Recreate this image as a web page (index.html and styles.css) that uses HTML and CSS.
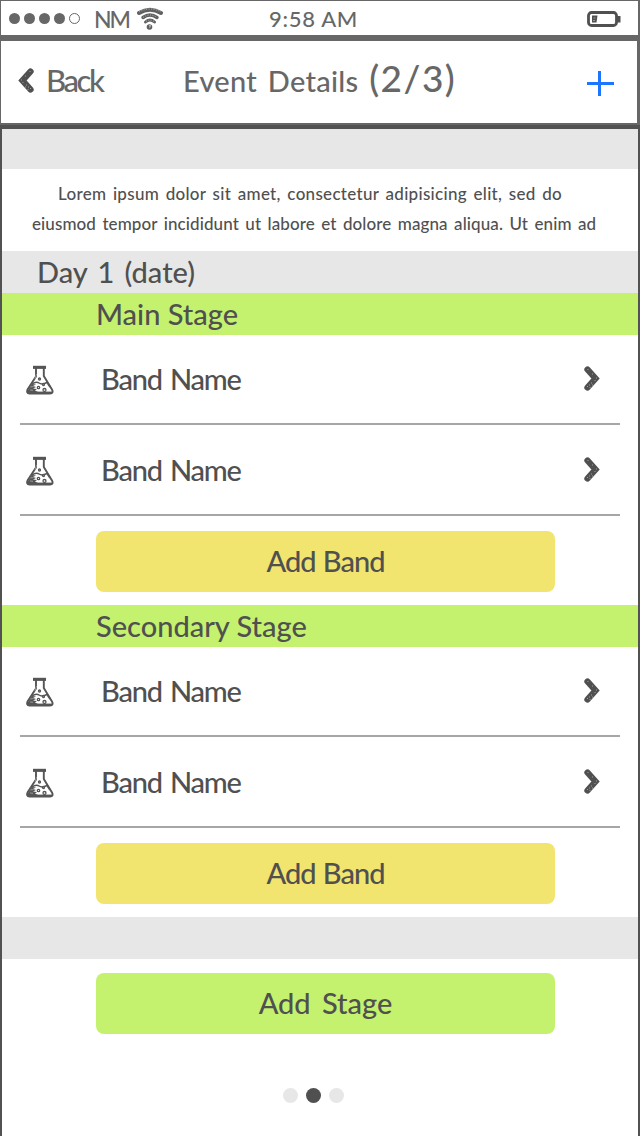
FILE: index.html
```
<!DOCTYPE html>
<html lang="en">
<head>
<meta charset="utf-8">
<title>Event Details</title>
<link rel="stylesheet" href="styles.css">
</head>
<body>
<svg class="defs" aria-hidden="true">
  <symbol id="chevron" viewBox="0 0 18 28">
    <path d="M4.5 4.5 L12.500 13.5 L4.5 22.500" fill="none" stroke="#505050" stroke-width="6.300" stroke-linecap="round" stroke-linejoin="miter"/>
    <path d="M4.500 4.500h1M9 9h1M13 13h1M11.500 15.500h1M8 18h1M6 20h1M4 21.500h1M9 20h1M6.500 22.500h1" stroke="#a0a0a0" stroke-width="1"/>
  </symbol>
  <symbol id="flask" viewBox="0 0 30 32">
    <path d="M8 3.500h13M11 4.500v8L2.500 25.500Q1 29 4.500 29.500H25Q29 29 27 25.500L18.800 12V4.500" fill="#fff" stroke="#555" stroke-width="1.900" stroke-linejoin="round"/>
    <path d="M8 3.300h13" stroke="#555" stroke-width="3"/>
    <path d="M6.500 20.500Q11 17 14 19T22 18.500L25 23" fill="none" stroke="#555" stroke-width="1.500"/>
    <path d="M7 20L3 26V28.500H14L10 26.500L12 25L8 24.500L11 23L8 22L11 20.500Z" fill="#555"/>
    <path d="M3 28.800H27" stroke="#555" stroke-width="2.400"/>
    <path d="M11.500 10l-1.500 5M5.500 23l3-.5M5 26l3 .3" stroke="#999" stroke-width="1"/>
    <g fill="#fff" stroke="#555" stroke-width="1.300"><circle cx="14.500" cy="15" r="1"/><circle cx="18.500" cy="20.500" r="1"/><circle cx="13.500" cy="23.500" r="1.200"/><circle cx="19.500" cy="26" r="1.500"/></g>
  </symbol>
</svg>
<div class="screen">
  <div class="status">
    <div class="carrier">
      <i class="dot"></i><i class="dot"></i><i class="dot"></i><i class="dot"></i><i class="dot hollow"></i>
      <span class="network">NM</span>
      <svg class="wifi" viewBox="0 0 28 24">
        <g fill="none" stroke="#606060" stroke-linecap="round">
          <path d="M3 6Q14-.5 25 6" stroke-width="4"/>
          <path d="M7 10.500Q14 5.500 21 10.500" stroke-width="3.400"/>
          <path d="M9.500 15Q14 11 18.500 15" stroke-width="3"/>
        </g>
        <path d="M3 5Q14-1 25 5M7 10.500Q14 5.500 21 10.500M10 14.500Q14 11.500 18 14.500" fill="none" stroke="#c8c8c8" stroke-width=".8" stroke-dasharray="1 1.500"/>
        <circle cx="13.500" cy="20" r="2.800" fill="#606060"/><path d="M13 19l1.500-.8-.8 2.500" fill="none" stroke="#ddd" stroke-width=".8"/>
      </svg>
    </div>
    <span class="time">9:58 AM</span>
    <svg class="battery" viewBox="0 0 36 18">
      <rect x="2.500" y="2.500" width="28" height="13" rx="3" fill="none" stroke="#505050" stroke-width="2.800"/>
      <path d="M31 6h3.500v6.500h-3.500zM6 5.500h5.500L10.500 12.500H6z" fill="#505050"/>
      <path d="M7.500 8h2M7 10.500h2" stroke="#bbb" stroke-width=".7"/>
    </svg>
  </div>
  <header class="nav">
    <div class="back"><svg class="chev-back"><use href="#chevron"/></svg><span class="back-label">Back</span></div>
    <h1 class="title">Event Details <span class="step">(2/3)</span></h1>
    <svg class="plus" viewBox="0 0 27 25"><path d="M0 12.500h27M12.500 0v25" stroke="#1d76ff" stroke-width="3"/></svg>
  </header>
  <main class="content">
    <div class="band-gray top"></div>
    <div class="intro"><p class="line one">Lorem ipsum dolor sit amet, consectetur adipisicing elit, sed do</p><p class="line two">eiusmod tempor incididunt ut labore et dolore magna aliqua. Ut enim ad</p></div>
    <div class="band-gray day">Day 1 (date)</div>
    <section class="stage">
      <h2 class="stage-name">Main Stage</h2>
      <div class="row"><svg class="flask"><use href="#flask"/></svg><span class="name">Band Name</span><svg class="chev"><use href="#chevron"/></svg></div>
      <div class="row second"><svg class="flask"><use href="#flask"/></svg><span class="name">Band Name</span><svg class="chev"><use href="#chevron"/></svg></div>
      <div class="button yellow">Add Band</div>
    </section>
    <section class="stage">
      <h2 class="stage-name">Secondary Stage</h2>
      <div class="row"><svg class="flask"><use href="#flask"/></svg><span class="name">Band Name</span><svg class="chev"><use href="#chevron"/></svg></div>
      <div class="row second"><svg class="flask"><use href="#flask"/></svg><span class="name">Band Name</span><svg class="chev"><use href="#chevron"/></svg></div>
      <div class="button yellow">Add Band</div>
    </section>
    <div class="band-gray"></div>
    <div class="button green">Add Stage</div>
    <div class="pager"><i class="page"></i><i class="page active"></i><i class="page"></i></div>
  </main>
</div>
</body>
</html>
```
FILE: styles.css
```
* { box-sizing: border-box; margin: 0; padding: 0; }
body { width: 640px; height: 1136px; overflow: hidden; background: #fff; color: #505050; font-family: Lato, "Open Sans", sans-serif; font-weight: 500; white-space: nowrap; }
svg { display: block; flex: none; }
.defs { position: absolute; width: 0; height: 0; }
.screen { height: 1136px; display: flex; flex-direction: column; }
.status { height: 41px; border: solid #676767; border-width: 1px 2px 6px 1px; display: grid; grid-template-columns: 268px 1fr 52px; align-items: center; color: #676767; font-size: 22px; line-height: 34px; }
.carrier { display: flex; align-items: center; padding-left: 8px; gap: 4px; }
.dot { width: 11px; height: 11px; border-radius: 50%; background: #676767; }
.dot.hollow { background: #fff; border: 1px solid #676767; }
.network { width: 33px; margin: 0 0 0 10px; font-size: 23px; letter-spacing: -2px; }
.wifi { width: 28px; height: 24px; margin-left: 5px; }
.time { padding-top: 1px; letter-spacing: .7px; }
.battery { width: 36px; height: 18px; }
.nav { height: 84px; border: solid #676767; border-width: 0 3px 2px 1px; display: grid; grid-template-columns: 182px 1fr 51px; color: #676767; align-items: center; }
.back { display: flex; align-items: center; }
.chev-back { width: 18px; height: 28px; margin: -3px 0 0 16px; transform: scaleX(-1); }
.back-label { margin: -4px 0 0 11px; font-size: 31px; line-height: 36px; letter-spacing: -2.400px; }
.title { margin-top: -6px; font-size: 29px; font-weight: 500; line-height: 36px; letter-spacing: .3px; word-spacing: 3px; }
.step { font-size: 37px; letter-spacing: 1.500px; }
.plus { width: 27px; height: 25px; margin: 2px 0 0 1px; }
.content { flex: 1; border: solid #525252; border-width: 4px 2px 0; }
.band-gray { height: 42px; background: #e7e7e7; }
.band-gray.top { height: 40px; }
.intro { height: 82px; padding-top: 10px; }
.line { font-size: 17px; line-height: 30px; word-spacing: 2px; }
.one { padding-left: 56px; letter-spacing: .3px; }
.two { padding-left: 30px; letter-spacing: .1px; }
.day { padding-left: 35px; line-height: 42px; font-size: 29px; word-spacing: 3px; }
.stage { height: 312px; }
.stage-name { height: 42px; background: #c4f26f; padding-left: 94px; font-size: 29px; line-height: 42px; font-weight: 500; }
.row { height: 90px; margin: 0 18px; border-bottom: 2px solid #a6a6a6; display: flex; align-items: center; font-size: 29px; }
.row.second { height: 91px; }
.flask { width: 30px; height: 32px; margin: 2px 0 0 5px; }
.name { margin-left: 46px; flex: 1; line-height: 36px; letter-spacing: -1.200px; word-spacing: 2px; }
.chev { width: 18px; height: 28px; margin-right: 19px; }
.button { width: 459px; height: 61px; margin: 15px 0 0 94px; border-radius: 8px; font-size: 29px; line-height: 60px; text-align: center; }
.yellow { background: #f1e46f; letter-spacing: -1px; word-spacing: 1px; }
.green { background: #c4f26f; margin-top: 14px; word-spacing: 4px; }
.pager { display: flex; justify-content: center; gap: 8px; margin: 54px 13px 0 0; }
.page { width: 15px; height: 15px; border-radius: 50%; background: #e7e7e7; }
.active { background: #505050; }
```
